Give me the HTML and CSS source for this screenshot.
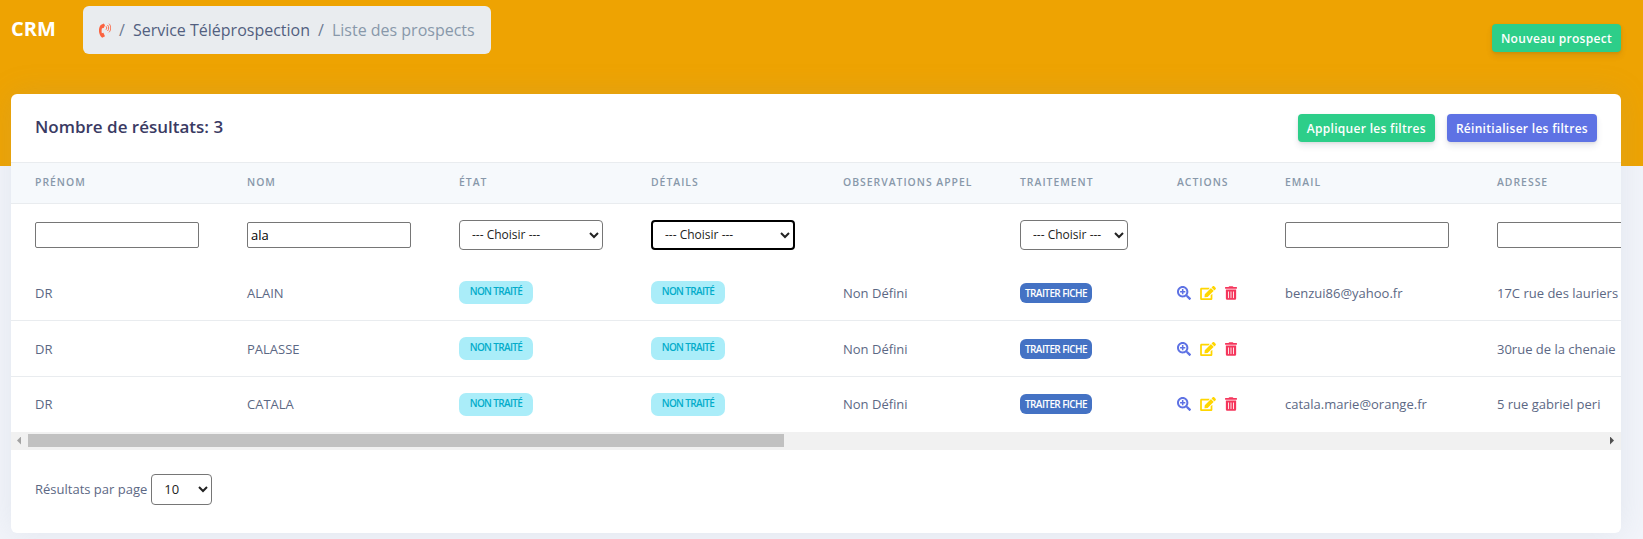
FILE: index.html
```html
<!DOCTYPE html>
<html lang="fr">
<head>
<meta charset="utf-8">
<title>CRM - Liste des prospects</title>
<link rel="stylesheet" href="styles.css">
</head>
<body>
<header class="topbar">
  <div class="brand">CRM</div>
  <nav class="crumbs">
    <svg class="phone" viewBox="0 0 12 15" aria-hidden="true">
      <path class="phone-body" d="M4.800.5 1.700 1.900C-.1 3.900-.6 8 .6 11.100c.6 1.600 1.500 2.900 2.600 3.700l2.800-1.600-1.600-3.500-1.600.5C2.500 8.700 2.500 6.700 3 5.300l1.700-.3 1.300-2.700z"/>
      <path class="phone-wave" d="M7 3.300c.9.900.9 2.500 0 3.400M8.500 2c1.600 1.600 1.600 4.400 0 6M10 .7c2.300 2.300 2.300 6.300 0 8.600"/>
    </svg>
    <span class="sep">/</span>
    <a class="crumb-link">Service Téléprospection</a>
    <span class="sep">/</span>
    <span class="crumb-active">Liste des prospects</span>
  </nav>
  <button class="btn btn-green btn-new">Nouveau prospect</button>
</header>

<main class="page">
  <section class="card">
    <div class="card-head">
      <h3 class="card-title">Nombre de résultats: 3</h3>
      <div class="head-actions">
        <button class="btn btn-green">Appliquer les filtres</button>
        <button class="btn btn-blue">Réinitialiser les filtres</button>
      </div>
    </div>

    <div class="table-wrap">
      <table class="grid">
        <colgroup>
          <col class="c-name"><col class="c-name"><col class="c-state"><col class="c-state">
          <col class="c-obs"><col class="c-treat"><col class="c-act"><col class="c-name"><col class="c-name">
        </colgroup>
        <thead>
          <tr>
            <th>Prénom</th><th>Nom</th><th>État</th><th>Détails</th><th>Observations appel</th>
            <th>Traitement</th><th>Actions</th><th>Email</th><th>Adresse</th>
          </tr>
        </thead>
        <tbody>
          <tr class="filters">
            <td><input class="field" type="text"></td>
            <td><input class="field" type="text" value="ala"></td>
            <td><select class="pick"><option>--- Choisir ---</option></select></td>
            <td><select class="pick pick-focus"><option>--- Choisir ---</option></select></td>
            <td></td>
            <td><select class="pick"><option>--- Choisir ---</option></select></td>
            <td></td>
            <td><input class="field" type="text"></td>
            <td><input class="field" type="text"></td>
          </tr>
          <tr class="row">
            <td>DR</td><td>ALAIN</td>
            <td><span class="tag">NON TRAITÉ</span></td>
            <td><span class="tag">NON TRAITÉ</span></td>
            <td>Non Défini</td>
            <td><span class="treat">TRAITER FICHE</span></td>
            <td>
              <div class="icons">
                <svg class="ic ic-view" viewBox="0 0 512 512"><path d="M304 192v32c0 6.600-5.400 12-12 12h-56v56c0 6.600-5.400 12-12 12h-32c-6.600 0-12-5.400-12-12v-56h-56c-6.600 0-12-5.400-12-12v-32c0-6.600 5.400-12 12-12h56v-56c0-6.600 5.400-12 12-12h32c6.600 0 12 5.400 12 12v56h56c6.600 0 12 5.400 12 12zm201 284.700L476.700 505c-9.400 9.400-24.600 9.400-33.900 0L343 405.300c-4.500-4.500-7-10.600-7-17V372c-35.300 27.600-79.700 44-128 44C93.100 416 0 322.900 0 208S93.100 0 208 0s208 93.100 208 208c0 48.300-16.400 92.700-44 128h16.300c6.400 0 12.500 2.500 17 7l99.700 99.700c9.300 9.400 9.300 24.600 0 34zM344 208c0-75.200-60.800-136-136-136S72 132.800 72 208s60.800 136 136 136 136-60.800 136-136z"/></svg>
                <svg class="ic ic-edit" viewBox="0 0 576 512"><path d="M402.600 83.200l90.200 90.200c3.800 3.800 3.800 10 0 13.800L274.400 405.600l-92.800 10.300c-12.400 1.400-22.900-9.100-21.500-21.500l10.300-92.800L388.800 83.200c3.800-3.800 10-3.800 13.800 0zm162-22.900l-48.800-48.800c-15.200-15.200-39.900-15.200-55.200 0l-35.400 35.400c-3.800 3.800-3.800 10 0 13.800l90.200 90.200c3.800 3.800 10 3.800 13.800 0l35.400-35.400c15.200-15.300 15.200-40 0-55.200zM384 346.200V448H64V128h229.800c3.200 0 6.200-1.300 8.500-3.500l40-40c7.600-7.600 2.200-20.500-8.500-20.500H48C21.500 64 0 85.500 0 112v352c0 26.500 21.500 48 48 48h352c26.500 0 48-21.500 48-48V306.200c0-10.700-12.900-16-20.500-8.500l-40 40c-2.200 2.300-3.500 5.300-3.500 8.500z"/></svg>
                <svg class="ic ic-del" viewBox="0 0 448 512"><path d="M32 464a48 48 0 0 0 48 48h288a48 48 0 0 0 48-48V128H32zm272-256a16 16 0 0 1 32 0v224a16 16 0 0 1-32 0zm-96 0a16 16 0 0 1 32 0v224a16 16 0 0 1-32 0zm-96 0a16 16 0 0 1 32 0v224a16 16 0 0 1-32 0zM432 32H312l-9.400-18.700A24 24 0 0 0 281.100 0H166.800a23.720 23.720 0 0 0-21.400 13.300L136 32H16A16 16 0 0 0 0 48v32a16 16 0 0 0 16 16h416a16 16 0 0 0 16-16V48a16 16 0 0 0-16-16z"/></svg>
              </div>
            </td>
            <td>benzui86@yahoo.fr</td><td>17C rue des lauriers</td>
          </tr>
          <tr class="row">
            <td>DR</td><td>PALASSE</td>
            <td><span class="tag">NON TRAITÉ</span></td>
            <td><span class="tag">NON TRAITÉ</span></td>
            <td>Non Défini</td>
            <td><span class="treat">TRAITER FICHE</span></td>
            <td>
              <div class="icons">
                <svg class="ic ic-view" viewBox="0 0 512 512"><path d="M304 192v32c0 6.600-5.400 12-12 12h-56v56c0 6.600-5.400 12-12 12h-32c-6.600 0-12-5.400-12-12v-56h-56c-6.600 0-12-5.400-12-12v-32c0-6.600 5.400-12 12-12h56v-56c0-6.600 5.400-12 12-12h32c6.600 0 12 5.400 12 12v56h56c6.600 0 12 5.400 12 12zm201 284.700L476.700 505c-9.400 9.400-24.600 9.400-33.900 0L343 405.300c-4.500-4.500-7-10.600-7-17V372c-35.300 27.600-79.700 44-128 44C93.100 416 0 322.900 0 208S93.100 0 208 0s208 93.100 208 208c0 48.300-16.400 92.700-44 128h16.300c6.400 0 12.500 2.500 17 7l99.700 99.700c9.300 9.400 9.300 24.600 0 34zM344 208c0-75.200-60.800-136-136-136S72 132.800 72 208s60.800 136 136 136 136-60.800 136-136z"/></svg>
                <svg class="ic ic-edit" viewBox="0 0 576 512"><path d="M402.600 83.200l90.200 90.200c3.800 3.800 3.800 10 0 13.800L274.400 405.600l-92.800 10.300c-12.400 1.400-22.900-9.100-21.500-21.500l10.300-92.800L388.800 83.200c3.800-3.800 10-3.800 13.800 0zm162-22.900l-48.800-48.800c-15.200-15.200-39.900-15.200-55.200 0l-35.400 35.400c-3.800 3.800-3.800 10 0 13.800l90.200 90.200c3.800 3.800 10 3.800 13.800 0l35.400-35.400c15.200-15.300 15.200-40 0-55.200zM384 346.200V448H64V128h229.800c3.200 0 6.200-1.300 8.500-3.500l40-40c7.600-7.600 2.200-20.500-8.500-20.500H48C21.500 64 0 85.500 0 112v352c0 26.500 21.500 48 48 48h352c26.500 0 48-21.500 48-48V306.200c0-10.700-12.900-16-20.500-8.500l-40 40c-2.200 2.300-3.500 5.300-3.500 8.500z"/></svg>
                <svg class="ic ic-del" viewBox="0 0 448 512"><path d="M32 464a48 48 0 0 0 48 48h288a48 48 0 0 0 48-48V128H32zm272-256a16 16 0 0 1 32 0v224a16 16 0 0 1-32 0zm-96 0a16 16 0 0 1 32 0v224a16 16 0 0 1-32 0zm-96 0a16 16 0 0 1 32 0v224a16 16 0 0 1-32 0zM432 32H312l-9.400-18.700A24 24 0 0 0 281.100 0H166.800a23.720 23.720 0 0 0-21.400 13.300L136 32H16A16 16 0 0 0 0 48v32a16 16 0 0 0 16 16h416a16 16 0 0 0 16-16V48a16 16 0 0 0-16-16z"/></svg>
              </div>
            </td>
            <td></td><td>30rue de la chenaie</td>
          </tr>
          <tr class="row">
            <td>DR</td><td>CATALA</td>
            <td><span class="tag">NON TRAITÉ</span></td>
            <td><span class="tag">NON TRAITÉ</span></td>
            <td>Non Défini</td>
            <td><span class="treat">TRAITER FICHE</span></td>
            <td>
              <div class="icons">
                <svg class="ic ic-view" viewBox="0 0 512 512"><path d="M304 192v32c0 6.600-5.400 12-12 12h-56v56c0 6.600-5.400 12-12 12h-32c-6.600 0-12-5.400-12-12v-56h-56c-6.600 0-12-5.400-12-12v-32c0-6.600 5.400-12 12-12h56v-56c0-6.600 5.400-12 12-12h32c6.600 0 12 5.400 12 12v56h56c6.600 0 12 5.400 12 12zm201 284.700L476.700 505c-9.400 9.400-24.600 9.400-33.900 0L343 405.300c-4.500-4.500-7-10.600-7-17V372c-35.300 27.600-79.700 44-128 44C93.100 416 0 322.900 0 208S93.100 0 208 0s208 93.100 208 208c0 48.300-16.400 92.700-44 128h16.300c6.400 0 12.500 2.500 17 7l99.700 99.700c9.300 9.400 9.300 24.600 0 34zM344 208c0-75.200-60.800-136-136-136S72 132.800 72 208s60.800 136 136 136 136-60.800 136-136z"/></svg>
                <svg class="ic ic-edit" viewBox="0 0 576 512"><path d="M402.600 83.200l90.200 90.200c3.800 3.800 3.800 10 0 13.800L274.400 405.600l-92.800 10.300c-12.400 1.400-22.900-9.100-21.500-21.500l10.300-92.800L388.800 83.200c3.800-3.800 10-3.800 13.800 0zm162-22.900l-48.800-48.800c-15.200-15.200-39.900-15.200-55.200 0l-35.400 35.400c-3.800 3.800-3.800 10 0 13.800l90.200 90.200c3.800 3.800 10 3.800 13.800 0l35.400-35.400c15.200-15.300 15.200-40 0-55.200zM384 346.200V448H64V128h229.800c3.200 0 6.200-1.300 8.500-3.500l40-40c7.600-7.600 2.200-20.500-8.500-20.500H48C21.500 64 0 85.500 0 112v352c0 26.500 21.500 48 48 48h352c26.500 0 48-21.500 48-48V306.200c0-10.700-12.900-16-20.500-8.500l-40 40c-2.200 2.300-3.500 5.300-3.500 8.500z"/></svg>
                <svg class="ic ic-del" viewBox="0 0 448 512"><path d="M32 464a48 48 0 0 0 48 48h288a48 48 0 0 0 48-48V128H32zm272-256a16 16 0 0 1 32 0v224a16 16 0 0 1-32 0zm-96 0a16 16 0 0 1 32 0v224a16 16 0 0 1-32 0zm-96 0a16 16 0 0 1 32 0v224a16 16 0 0 1-32 0zM432 32H312l-9.400-18.700A24 24 0 0 0 281.100 0H166.800a23.720 23.720 0 0 0-21.400 13.300L136 32H16A16 16 0 0 0 0 48v32a16 16 0 0 0 16 16h416a16 16 0 0 0 16-16V48a16 16 0 0 0-16-16z"/></svg>
              </div>
            </td>
            <td>catala.marie@orange.fr</td><td>5 rue gabriel peri</td>
          </tr>
        </tbody>
      </table>
    </div>

    <div class="scrollbar" aria-hidden="true">
      <span class="arrow arrow-left"></span>
      <span class="thumb"></span>
      <span class="arrow arrow-right"></span>
    </div>

    <div class="card-foot">
      <span class="foot-label">Résultats par page</span>
      <select class="pick pick-size"><option>10</option></select>
    </div>
  </section>
</main>
</body>
</html>
```
FILE: styles.css
```css
* { box-sizing: border-box; }

html, body { height: 100%; }

body {
  margin: 0;
  overflow: hidden;
  background: #f2f4fa;
  font-family: "Open Sans", "Liberation Sans", sans-serif;
  color: #5c6884;
}

.topbar {
  display: flex;
  align-items: flex-start;
  height: 166px;
  padding: 6px 22px 0 11px;
  background: #eea302;
}

.brand {
  width: 72px;
  margin-top: 9px;
  font-size: 20px;
  line-height: 27px;
  font-weight: 700;
  color: #fff;
}

.crumbs {
  display: flex;
  align-items: center;
  height: 48px;
  padding: 0 16px;
  border-radius: 6px;
  background: #e9ecef;
  font-size: 16px;
  white-space: nowrap;
}

.phone { width: 12px; height: 15px; flex: none; }
.phone-body { fill: #fb6340; }
.phone-wave { fill: none; stroke: #fb6340; stroke-width: .9; }

.sep { margin: 0 8px; color: #6c7a92; }
.crumb-link { color: #525f7f; }
.crumb-active { color: #8898aa; }

.btn {
  height: 28px;
  padding: 0 9px;
  border: 0;
  border-radius: 4px;
  font-family: inherit;
  font-size: 12px;
  font-weight: 600;
  letter-spacing: .3px;
  color: #fff;
  white-space: nowrap;
  box-shadow: 0 4px 6px rgba(50, 50, 93, .11), 0 1px 3px rgba(0, 0, 0, .08);
}
.btn-green { background: #2dce89; }
.btn-blue { background: #5e72e4; }
.btn-new { margin: 18px 0 0 auto; }

.page {
  margin-top: -72px;
  padding: 0 22px 0 11px;
}

.card {
  height: 439px;
  border-radius: 6px;
  background: #fff;
  overflow: hidden;
  box-shadow: 0 0 32px rgba(136, 152, 170, .15);
}

.card-head {
  display: flex;
  align-items: center;
  justify-content: space-between;
  height: 68px;
  padding: 0 24px;
}

.card-title {
  margin: 0 0 3px;
  font-size: 17px;
  font-weight: 600;
  color: #3a3a63;
}

.head-actions { display: flex; gap: 12px; }

.table-wrap { overflow: hidden; }

.grid {
  width: 1674px;
  border-collapse: collapse;
  table-layout: fixed;
}

.c-name { width: 212px; }
.c-state { width: 192px; }
.c-obs { width: 177px; }
.c-treat { width: 157px; }
.c-act { width: 108px; }

.grid th {
  height: 41px;
  padding: 0 0 2px 24px;
  border-top: 1px solid #e9ecef;
  border-bottom: 1px solid #e9ecef;
  background: #f6f9fc;
  font-size: 10.400px;
  font-weight: 600;
  letter-spacing: 1px;
  text-align: left;
  text-transform: uppercase;
  color: #8898aa;
  white-space: nowrap;
}

.grid td {
  padding: 0 0 0 24px;
  font-size: 13px;
  white-space: nowrap;
  vertical-align: middle;
}

.filters { height: 62px; }
.row { height: 55px; }
.row + .row { height: 56px; border-top: 1px solid #e9ecef; }
.row:last-child { height: 55px; }

.field {
  display: block;
  width: 164px;
  height: 26px;
  padding: 1px 3px;
  border: 1px solid #767676;
  border-radius: 2px;
  background: #fff;
  font-family: inherit;
  font-size: 13px;
  color: #000;
}

.pick {
  display: block;
  width: 100%;
  height: 30px;
  padding: 0 4px 0 8px;
  border: 1px solid #767676;
  border-radius: 4px;
  background: #fff;
  font-family: inherit;
  font-size: 12px;
  color: #222;
}
.filters td:nth-child(3) .pick,
.filters td:nth-child(4) .pick { width: 144px; }
.filters td:nth-child(6) .pick { width: 108px; }
.pick-focus { border: 2px solid #000; }

.tag {
  display: inline-block;
  width: 74px;
  height: 23px;
  border-radius: 7px;
  background: #aaedf9;
  font-size: 10px;
  font-weight: 600;
  line-height: 21px;
  letter-spacing: -.65px;
  text-align: center;
  color: #03acca;
}

.treat {
  display: inline-block;
  width: 72px;
  height: 20px;
  border-radius: 6px;
  background: #4472c4;
  font-size: 10px;
  font-weight: 600;
  line-height: 20px;
  letter-spacing: -.6px;
  text-align: center;
  color: #fff;
}

.icons { display: flex; align-items: center; gap: 9px; }
.ic { display: block; height: 14px; flex: none; }
.ic-view { width: 14px; fill: #5e72e4; }
.ic-edit { width: 16px; fill: #ffd600; }
.ic-del { width: 12px; fill: #f5365c; }

.scrollbar {
  display: flex;
  align-items: center;
  height: 18px;
  background: #f1f1f1;
}

.thumb {
  width: 756px;
  height: 13px;
  margin-right: auto;
  background: #c1c1c1;
}

.arrow {
  flex: none;
  width: 4px;
  height: 8px;
}
.arrow-left {
  margin: 0 7px 0 6px;
  background: #a3a3a3;
  clip-path: polygon(100% 0, 100% 100%, 0 50%);
}
.arrow-right {
  margin: 0 7px 0 6px;
  background: #505050;
  clip-path: polygon(0 0, 100% 50%, 0 100%);
}

.card-foot {
  display: flex;
  align-items: flex-start;
  gap: 4px;
  height: 82px;
  padding: 24px 24px 0;
}

.foot-label { font-size: 13px; line-height: 31px; }

.pick.pick-size {
  width: 61px;
  height: 31px;
  padding-left: 8px;
  font-size: 13px;
}
```
